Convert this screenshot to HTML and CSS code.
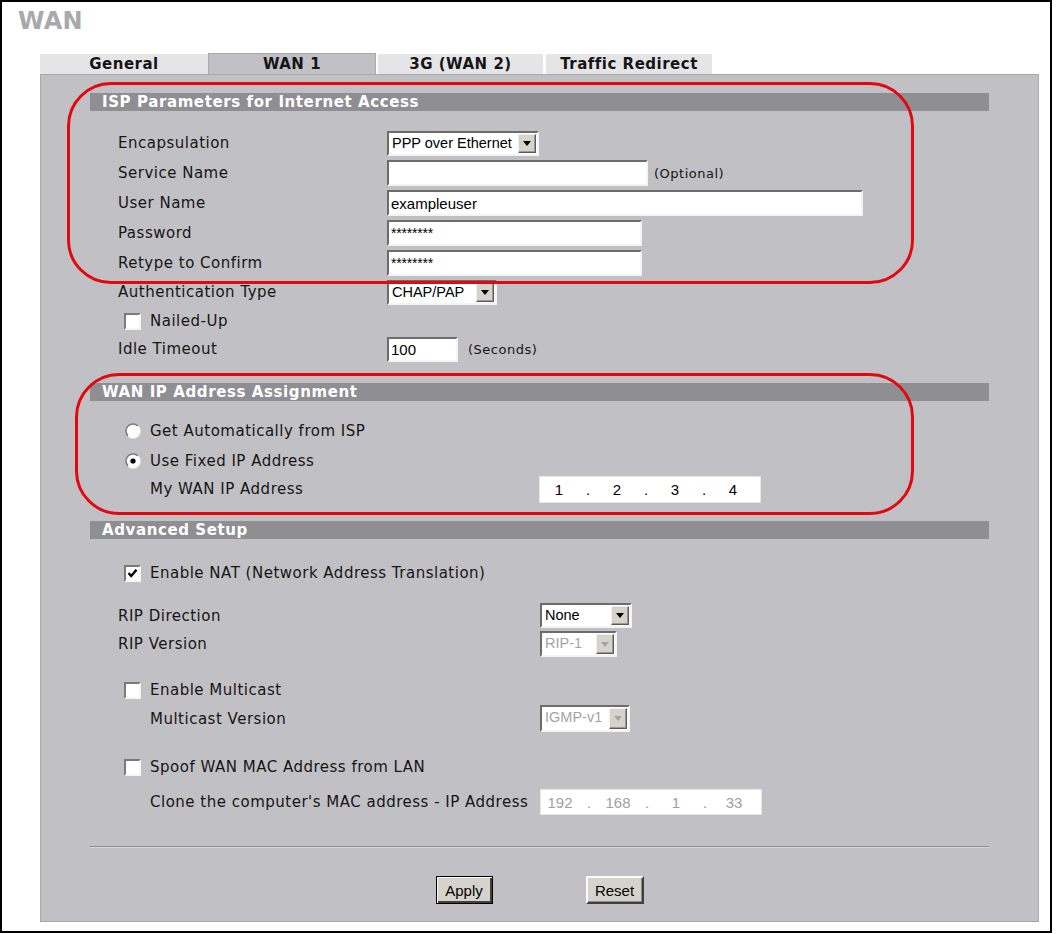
FILE: index.html
```html
<!DOCTYPE html>
<html>
<head>
<meta charset="utf-8">
<title>WAN</title>
<link rel="stylesheet" href="styles.css">
</head>
<body>
<div class="frame">
  <h1 class="title">WAN</h1>
  <div class="tabs">
    <div class="tab tab-general">General</div>
    <div class="tab tab-wan1 active">WAN 1</div>
    <div class="tab tab-3g">3G (WAN 2)</div>
    <div class="tab tab-traffic">Traffic Redirect</div>
  </div>
  <div class="panel">
    <div class="head head1">ISP Parameters for Internet Access</div>
    <div class="rows rows1">
      <div class="row">
        <span class="label">Encapsulation</span>
        <div class="select w-encap"><span class="select-text">PPP over Ethernet</span><span class="select-btn"><span class="tri"></span></span></div>
      </div>
      <div class="row">
        <span class="label">Service Name</span>
        <input class="field w-service" type="text" value="">
        <span class="note">(Optional)</span>
      </div>
      <div class="row">
        <span class="label">User Name</span>
        <input class="field w-user" type="text" value="exampleuser">
      </div>
      <div class="row">
        <span class="label">Password</span>
        <input class="field pw w-pass" type="text" value="********">
      </div>
      <div class="row">
        <span class="label">Retype to Confirm</span>
        <input class="field pw w-pass" type="text" value="********">
      </div>
      <div class="row r-auth">
        <span class="label">Authentication Type</span>
        <div class="select w-auth"><span class="select-text">CHAP/PAP</span><span class="select-btn"><span class="tri"></span></span></div>
      </div>
      <div class="row check-row">
        <span class="check"></span>
        <span class="check-label">Nailed-Up</span>
      </div>
      <div class="row r-idle">
        <span class="label">Idle Timeout</span>
        <input class="field w-idle" type="text" value="100">
        <span class="note note-sec">(Seconds)</span>
      </div>
    </div>

    <div class="head head2">WAN IP Address Assignment</div>
    <div class="rows rows2">
      <div class="row check-row">
        <svg class="radio" width="16" height="16" viewBox="0 0 16 16"><circle cx="8" cy="8" r="7" fill="#fff"/><path d="M3.05 12.95 A7 7 0 0 1 12.95 3.05" stroke="#7c7c7c" stroke-width="1.6" fill="none"/><path d="M12.95 3.05 A7 7 0 0 1 3.05 12.95" stroke="#f4f4f4" stroke-width="1.6" fill="none"/></svg>
        <span class="check-label">Get Automatically from ISP</span>
      </div>
      <div class="row check-row">
        <svg class="radio" width="16" height="16" viewBox="0 0 16 16"><circle cx="8" cy="8" r="7" fill="#fff"/><path d="M3.05 12.95 A7 7 0 0 1 12.95 3.05" stroke="#7c7c7c" stroke-width="1.6" fill="none"/><path d="M12.95 3.05 A7 7 0 0 1 3.05 12.95" stroke="#f4f4f4" stroke-width="1.6" fill="none"/><circle cx="8" cy="8" r="2.6" fill="#000"/></svg>
        <span class="check-label">Use Fixed IP Address</span>
      </div>
      <div class="row r-ip">
        <span class="label label-adv indent">My WAN IP Address</span>
        <div class="ip"><span class="oct">1</span><span class="dot">.</span><span class="oct">2</span><span class="dot">.</span><span class="oct">3</span><span class="dot">.</span><span class="oct">4</span></div>
      </div>
    </div>

    <div class="head head3">Advanced Setup</div>
    <div class="rows rows3">
      <div class="row check-row r-nat">
        <span class="check"><svg width="13" height="13" viewBox="0 0 13 13"><path d="M2.5 6 L5.2 9 L10.5 2.8" stroke="#000" stroke-width="2.4" fill="none"/></svg></span>
        <span class="check-label">Enable NAT (Network Address Translation)</span>
      </div>
      <div class="row r-ripdir">
        <span class="label label-adv">RIP Direction</span>
        <div class="select w-none"><span class="select-text">None</span><span class="select-btn"><span class="tri"></span></span></div>
      </div>
      <div class="row r-ripver">
        <span class="label label-adv">RIP Version</span>
        <div class="select disabled w-rip"><span class="select-text">RIP-1</span><span class="select-btn"><span class="tri"></span></span></div>
      </div>
      <div class="row check-row r-mcast">
        <span class="check"></span>
        <span class="check-label">Enable Multicast</span>
      </div>
      <div class="row r-mver">
        <span class="label label-adv indent">Multicast Version</span>
        <div class="select disabled w-igmp"><span class="select-text">IGMP-v1</span><span class="select-btn"><span class="tri"></span></span></div>
      </div>
      <div class="row check-row r-spoof">
        <span class="check"></span>
        <span class="check-label">Spoof WAN MAC Address from LAN</span>
      </div>
      <div class="row r-clone">
        <span class="label label-adv indent">Clone the computer's MAC address - IP Address</span>
        <div class="ip disabled"><span class="oct">192</span><span class="dot">.</span><span class="oct">168</span><span class="dot">.</span><span class="oct">1</span><span class="dot">.</span><span class="oct">33</span></div>
      </div>
    </div>

    <div class="sep"></div>
    <div class="buttons">
      <button class="btn btn-default" type="button">Apply</button>
      <button class="btn btn-reset" type="button">Reset</button>
    </div>
  </div>

  <div class="mark mark1"></div>
  <div class="mark mark2"></div>
</div>
</body>
</html>
```

FILE: styles.css
```css
html, body {
  margin: 0;
  padding: 0;
  background: #fff;
}

body {
  font-family: "DejaVu Sans", Verdana, sans-serif;
  font-size: 15px;
  letter-spacing: 0.5px;
  color: #161616;
}

.frame {
  position: relative;
  box-sizing: border-box;
  width: 1052px;
  height: 933px;
  border: 2px solid #000;
  background: #fff;
}

.title {
  margin: 5px 0 0 0;
  padding-left: 16px;
  font-family: "DejaVu Sans", Verdana, sans-serif;
  font-weight: bold;
  font-size: 24px;
  line-height: 28px;
  height: 28px;
  color: #a9a9ab;
  letter-spacing: 0.3px;
}

.tabs {
  display: flex;
  align-items: flex-end;
  margin: 18px 0 0 38px;
  height: 21px;
}

.tab {
  box-sizing: border-box;
  height: 20px;
  background: #e5e5e7;
  font-weight: bold;
  font-size: 15px;
  letter-spacing: 0.5px;
  line-height: 20px;
  text-align: center;
  color: #151515;
}

.tab-general { width: 168px; }
.tab-wan1 { width: 168px; }
.tab-3g { width: 165px; margin-left: 2px; }
.tab-traffic { width: 166px; margin-left: 3px; }

.tab.active {
  height: 21px;
  background: #c1c0c4;
  border: 1px solid #a9a8ac;
  border-bottom: none;
  line-height: 20px;
}

.panel {
  box-sizing: border-box;
  width: 999px;
  margin-left: 38px;
  background: #c1c0c4;
  border: 1px solid #a9a8ac;
  padding: 0 49px 17px 49px;
}

.head {
  height: 18px;
  line-height: 18px;
  background: #8f8e92;
  color: #fff;
  font-weight: bold;
  font-size: 15px;
  padding-left: 12px;
  letter-spacing: 0.6px;
}

.head1 { margin-top: 18px; }
.head2 { margin-top: 21px; }
.head3 { margin-top: 19px; }

.rows { padding-left: 28px; }
.rows1 { margin-top: 17px; }
.rows2 { margin-top: 15px; }
.rows3 { margin-top: 0; }

.row {
  display: flex;
  align-items: center;
  height: 30px;
  white-space: nowrap;
}

.label {
  width: 269px;
  flex-shrink: 0;
}

.label-adv { width: 422px; }
.label.indent {
  box-sizing: border-box;
  padding-left: 32px;
}

.rows2 .label-adv { width: 421px; }

.r-auth { height: 28px; }
.r-idle { height: 26px; }
.r-ip { height: 26px; }
.r-nat { margin-top: 19px; }
.r-ripdir { margin-top: 15px; height: 25px; }
.r-ripver { margin-top: 3px; height: 26px; }
.r-mcast { margin-top: 18px; }
.r-mver { height: 27px; }
.r-spoof { margin-top: 20px; }
.r-clone { margin-top: 7px; height: 26px; }

.check-row { padding-left: 6px; }

.check {
  box-sizing: border-box;
  width: 17px;
  height: 17px;
  flex-shrink: 0;
  background: #fff;
  border: 2px solid;
  border-color: #7a7a7a #f6f6f6 #f6f6f6 #7a7a7a;
  display: flex;
  align-items: center;
  justify-content: center;
}

.check svg { display: block; }

.radio {
  display: block;
  flex-shrink: 0;
  margin-left: 1px;
}

.check-label { margin-left: 9px; }

.note {
  font-size: 13px;
  letter-spacing: 0.5px;
  margin-left: 6px;
  color: #161616;
}

.note-sec { margin-left: 10px; }

.field {
  box-sizing: border-box;
  height: 26px;
  margin: 0;
  padding: 0 2px;
  background: #fff;
  border: 2px solid;
  border-color: #6c6c6c #f4f4f4 #f4f4f4 #6c6c6c;
  font-family: "Liberation Sans", Arial, sans-serif;
  font-size: 15px;
  letter-spacing: 0;
  color: #000;
  outline: none;
}

.field.pw { font-size: 14px; letter-spacing: -0.2px; }

.w-service { width: 261px; }
.w-user { width: 476px; }
.w-pass { width: 255px; }
.w-idle { width: 71px; height: 25px; }

.select {
  box-sizing: border-box;
  display: flex;
  height: 25px;
  background: #fff;
  border: 2px solid;
  border-color: #6c6c6c #f4f4f4 #f4f4f4 #6c6c6c;
  font-family: "Liberation Sans", Arial, sans-serif;
  font-size: 14.5px;
  letter-spacing: 0;
  color: #000;
}

.select-text {
  flex: 1;
  padding-left: 3px;
  line-height: 21px;
  overflow: hidden;
}

.select-btn {
  box-sizing: border-box;
  width: 18px;
  margin: 1px 1px 1px 0;
  background: #d6d3cc;
  border: 1px solid;
  border-color: #f0efea #5a5a5a #5a5a5a #f0efea;
  box-shadow: inset -1px -1px 0 #9a9890;
  display: flex;
  align-items: center;
  justify-content: center;
}

.tri {
  width: 0;
  height: 0;
  border-left: 4px solid transparent;
  border-right: 4px solid transparent;
  border-top: 5px solid #000;
}

.select.disabled { color: #a4a4a4; }
.select.disabled .tri { border-top-color: #a4a4a4; }

.w-encap { width: 152px; }
.w-auth { width: 110px; }
.w-none { width: 92px; height: 25px; }
.w-rip { width: 77px; height: 26px; }
.w-igmp { width: 90px; height: 27px; }

.ip {
  box-sizing: border-box;
  display: flex;
  align-items: center;
  width: 222px;
  height: 27px;
  background: #fff;
  border: 1px solid #e6e6e6;
  font-family: "Liberation Sans", Arial, sans-serif;
  font-size: 15px;
  letter-spacing: 0;
  color: #000;
}

.ip.disabled { color: #a0a0a0; height: 26px; }

.oct { width: 38px; text-align: center; }
.dot { width: 20px; text-align: center; }

.sep {
  margin-top: 31px;
  height: 0;
  border-top: 1px solid #8e8d91;
  border-bottom: 1px solid #d6d5d9;
}

.buttons {
  display: flex;
  justify-content: center;
  gap: 93px;
  margin-top: 28px;
  height: 28px;
}

.btn {
  box-sizing: border-box;
  height: 28px;
  margin: 0;
  padding: 0;
  background: #d6d3cc;
  font-family: "Liberation Sans", Arial, sans-serif;
  font-size: 15px;
  letter-spacing: 0;
  color: #000;
  border: 2px solid;
  border-color: #fbfbf9 #404040 #404040 #fbfbf9;
  box-shadow: inset -1px -1px 0 #8a8880;
}

.btn-default {
  width: 57px;
  border: 1px solid #000;
  box-shadow: inset 1px 1px 0 #fbfbf9, inset -2px -2px 0 #404040;
}

.btn-reset { width: 58px; }

.mark {
  position: absolute;
  box-sizing: border-box;
  border: 3px solid #e2080f;
  pointer-events: none;
}

.mark1 {
  left: 65px;
  top: 80px;
  width: 847px;
  height: 202px;
  border-radius: 44px;
}

.mark2 {
  left: 73px;
  top: 371px;
  width: 839px;
  height: 142px;
  border-radius: 44px;
}
```
